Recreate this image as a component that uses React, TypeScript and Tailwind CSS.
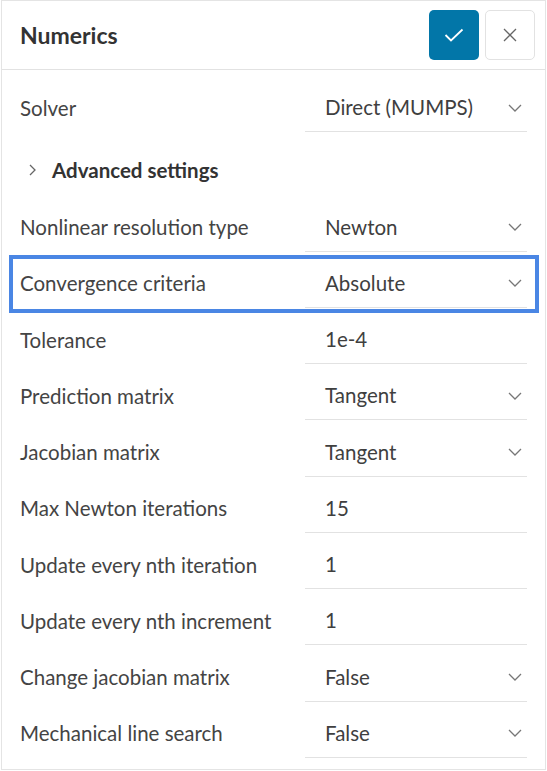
import React from "react";

const Chevron = () => (
  <svg width="14" height="8" viewBox="0 0 14 8" fill="none" className="shrink-0">
    <path d="M1 1l6 6 6-6" stroke="#777" strokeWidth="1.3" />
  </svg>
);

type Row = { label: string; value: string; select: boolean; highlight?: boolean };

const rows: Row[] = [
  { label: "Nonlinear resolution type", value: "Newton", select: true },
  { label: "Convergence criteria", value: "Absolute", select: true, highlight: true },
  { label: "Tolerance", value: "1e-4", select: false },
  { label: "Prediction matrix", value: "Tangent", select: true },
  { label: "Jacobian matrix", value: "Tangent", select: true },
  { label: "Max Newton iterations", value: "15", select: false },
  { label: "Update every nth iteration", value: "1", select: false },
  { label: "Update every nth increment", value: "1", select: false },
  { label: "Change jacobian matrix", value: "False", select: true },
  { label: "Mechanical line search", value: "False", select: true },
];

function Field({ label, value, select, highlight }: Row) {
  return (
    <div className="relative flex h-[56.25px] items-end">
      <div className="flex h-12 w-[285px] shrink-0 items-center text-[20.5px] text-[#444]">{label}</div>
      <div className="flex h-12 flex-1 items-center border-b border-[#e2e2e2] pl-[20px] pr-[5px] text-[20.5px] text-[#3f3f3f]">
        <span className="flex-1">{value}</span>
        {select && <Chevron />}
      </div>
      {highlight && (
        <div className="pointer-events-none absolute left-[-11px] right-[-12px] top-[3px] bottom-[-5px] border-4 border-[#4a86e4]" />
      )}
    </div>
  );
}

export default function App() {
  return (
    <div
      className="ml-px h-[770px] w-[545px] overflow-hidden border border-[#e4e4e4] bg-white"
      style={{ fontFamily: "Lato, 'Open Sans', sans-serif" }}
    >
      <div className="flex h-[69px] items-center border-b border-[#e2e2e2] pl-[18px] pr-[10px]">
        <div className="flex-1 text-[23px] font-bold text-[#333]">Numerics</div>
        <button className="flex h-[50px] w-[50px] items-center justify-center rounded-[5px] bg-[#0276a8]">
          <svg width="20" height="14" viewBox="0 0 20 14" fill="none">
            <path d="M1.5 7l5.5 5.5L18.5 1.5" stroke="white" strokeWidth="1.8" />
          </svg>
        </button>
        <button className="ml-[6px] flex h-[50px] w-[50px] items-center justify-center rounded-[5px] border border-[#e2e2e2] bg-white">
          <svg width="14" height="14" viewBox="0 0 14 14" fill="none">
            <path d="M1 1l12 12M13 1L1 13" stroke="#666" strokeWidth="1.3" />
          </svg>
        </button>
      </div>
      <div className="pl-[18px] pr-[18px] pt-[6px]">
        <Field label="Solver" value="Direct (MUMPS)" select={true} />
        <div className="flex h-[63px] items-start pt-[26px]">
          <div className="flex h-6 items-center pl-[9px]">
            <svg width="7" height="12" viewBox="0 0 7 12" fill="none">
              <path d="M1 1l5 5-5 5" stroke="#666" strokeWidth="1.3" />
            </svg>
            <span className="ml-[16px] text-[20.5px] font-bold text-[#333]">Advanced settings</span>
          </div>
        </div>
        {rows.map((r) => (
          <Field key={r.label} {...r} />
        ))}
      </div>
    </div>
  );
}
